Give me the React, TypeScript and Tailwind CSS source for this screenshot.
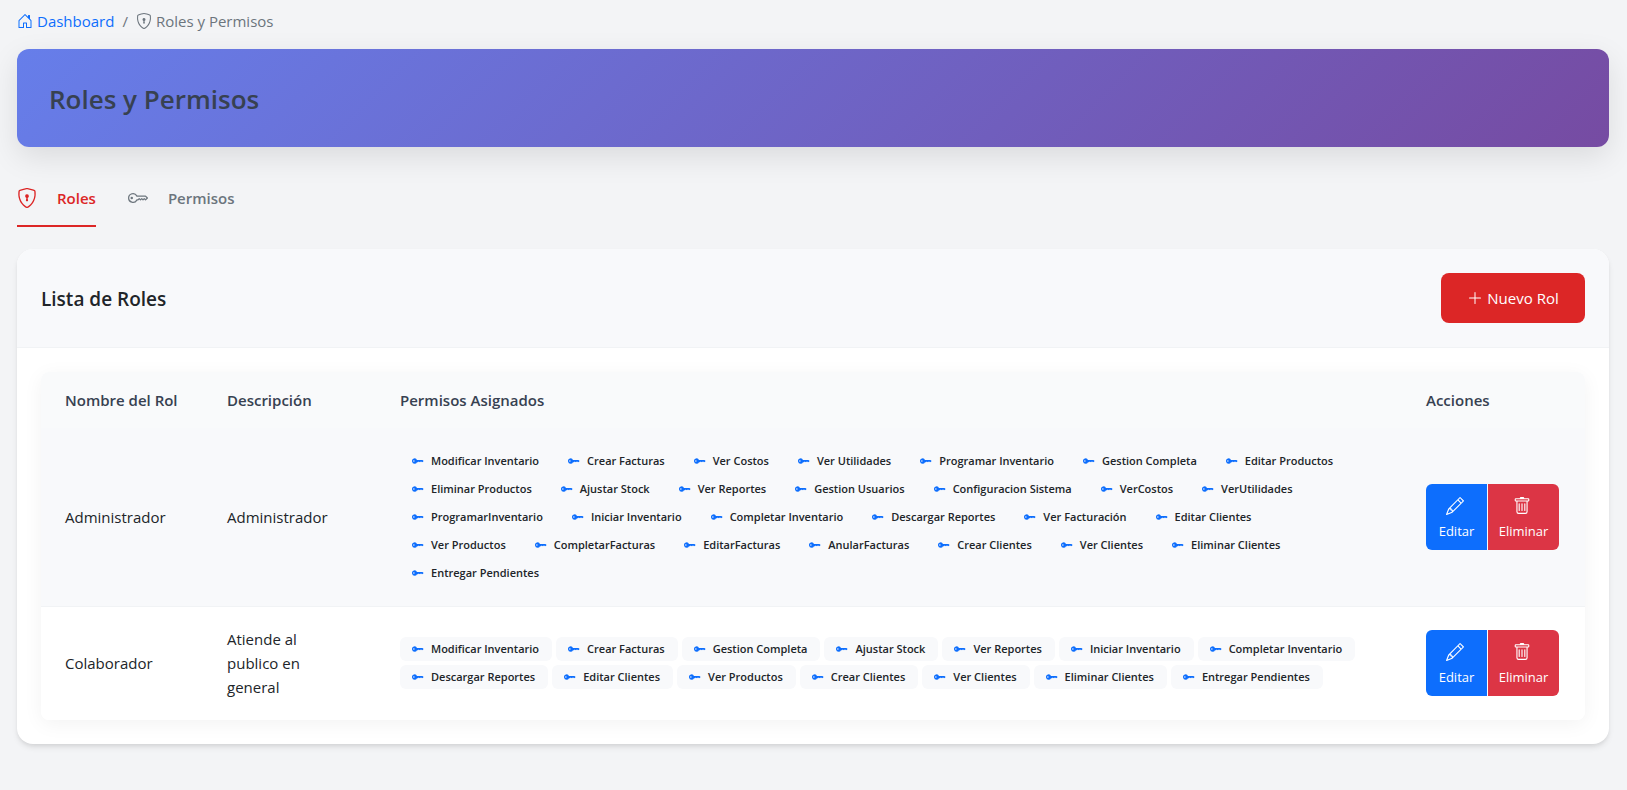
import type { ReactNode } from 'react';
import { BsHouseDoor, BsKey, BsKeyFill, BsPencil, BsPlusLg, BsShieldLock, BsTrash } from 'react-icons/bs';

type Role = {
  name: string;
  description: string;
  permissions: string[];
  rowClass: string;
};

const roles: Role[] = [
  {
    name: 'Administrador',
    description: 'Administrador',
    rowClass: 'h-[178px] bg-[#f8f9fb] border-b border-[#f1f3f5]',
    permissions: [
      'Modificar Inventario', 'Crear Facturas', 'Ver Costos', 'Ver Utilidades', 'Programar Inventario',
      'Gestion Completa', 'Editar Productos', 'Eliminar Productos', 'Ajustar Stock', 'Ver Reportes',
      'Gestion Usuarios', 'Configuracion Sistema', 'VerCostos', 'VerUtilidades', 'ProgramarInventario',
      'Iniciar Inventario', 'Completar Inventario', 'Descargar Reportes', 'Ver Facturación', 'Editar Clientes',
      'Ver Productos', 'CompletarFacturas', 'EditarFacturas', 'AnularFacturas', 'Crear Clientes',
      'Ver Clientes', 'Eliminar Clientes', 'Entregar Pendientes',
    ],
  },
  {
    name: 'Colaborador',
    description: 'Atiende al publico en general',
    rowClass: 'h-[114px] bg-white',
    permissions: [
      'Modificar Inventario', 'Crear Facturas', 'Gestion Completa', 'Ajustar Stock', 'Ver Reportes',
      'Iniciar Inventario', 'Completar Inventario', 'Descargar Reportes', 'Editar Clientes', 'Ver Productos',
      'Crear Clientes', 'Ver Clientes', 'Eliminar Clientes', 'Entregar Pendientes',
    ],
  },
];

function Permission({ children }: { children: ReactNode }) {
  return (
    <li className="flex h-6 items-center gap-[7px] rounded-md bg-[#f8f9fb] pr-[13px] pl-3 text-[11px] font-semibold text-[#212529]">
      <BsKeyFill className="size-3 shrink-0 text-[#0d6efd]" />
      {children}
    </li>
  );
}

function RoleRow({ role }: { role: Role }) {
  return (
    <tr className={role.rowClass}>
      <td className="px-6">{role.name}</td>
      <td className="px-6">{role.description}</td>
      <td className="px-6">
        <ul className="flex flex-wrap gap-1">
          {role.permissions.map((p) => (
            <Permission key={p}>{p}</Permission>
          ))}
        </ul>
      </td>
      <td className="px-6">
        <div className="flex gap-px text-[13px] text-white">
          <button type="button" className="flex h-[66px] w-[61px] flex-col items-center justify-center gap-1 rounded-l-md bg-[#0d6efd] pt-1.5">
            <BsPencil className="mr-1 size-[18px]" />
            Editar
          </button>
          <button type="button" className="flex h-[66px] w-[71px] flex-col items-center justify-center gap-1 rounded-r-md bg-[#dc3545] pt-1.5">
            <BsTrash className="mr-1 size-[18px]" />
            Eliminar
          </button>
        </div>
      </td>
    </tr>
  );
}

export default function App() {
  return (
    <div className="min-h-screen bg-[#f3f4f6] pt-[9px] pr-[18px] pb-12 pl-[17px] font-['Open_Sans',sans-serif] text-[15px] leading-6 text-[#212529]">
      <nav aria-label="breadcrumb">
        <ol className="flex items-center gap-2 text-[#6c757d]">
          <li>
            <a href="#dashboard" className="flex items-center gap-1 text-[#0d6efd]">
              <BsHouseDoor className="size-4" />
              Dashboard
            </a>
          </li>
          <li aria-hidden="true">/</li>
          <li className="flex items-center gap-1">
            <BsShieldLock className="size-4" />
            Roles y Permisos
          </li>
        </ol>
      </nav>

      <header className="mt-4 rounded-xl bg-[linear-gradient(135deg,#667eea_0%,#764ba2_100%)] px-8 pt-8 pb-[30px] shadow-[0_10px_30px_rgba(0,0,0,0.1)]">
        <h1 className="text-[26px] leading-9 font-semibold text-[#374151]">Roles y Permisos</h1>
      </header>

      <div role="tablist" className="mt-8 flex gap-8 font-semibold">
        <button type="button" role="tab" aria-selected="true" className="flex h-12 gap-5 border-b-2 border-[#dc2626] pt-[9px] text-[#dc2626]">
          <BsShieldLock className="size-5" />
          <span className="leading-5">Roles</span>
        </button>
        <button type="button" role="tab" aria-selected="false" className="flex h-12 gap-5 border-b-2 border-transparent pt-[9px] text-[#6c757d]">
          <BsKey className="size-5" />
          <span className="leading-5">Permisos</span>
        </button>
      </div>

      <section className="mt-[22px] overflow-hidden rounded-2xl bg-white shadow-[0_4px_6px_-1px_rgba(0,0,0,0.1),0_2px_4px_-1px_rgba(0,0,0,0.06)]">
        <div className="flex items-center justify-between border-b border-[#f1f3f5] bg-[#f8f9fb] p-6">
          <h2 className="pt-0.5 text-[19px] leading-7 font-semibold">Lista de Roles</h2>
          <button type="button" className="flex h-[50px] w-36 items-center justify-center gap-1 rounded-lg bg-[#dc2626] text-white">
            <BsPlusLg className="size-4" />
            Nuevo Rol
          </button>
        </div>
        <div className="p-6">
          <div className="overflow-hidden rounded-lg shadow-[0_4px_20px_rgba(0,0,0,0.05)]">
            <table className="w-full table-fixed text-left">
              <thead className="bg-[#f9fafb] text-[#374151]">
                <tr className="h-14">
                  <th scope="col" className="w-[162px] px-6 font-semibold">Nombre del Rol</th>
                  <th scope="col" className="w-[173px] px-6 font-semibold">Descripción</th>
                  <th scope="col" className="px-6 font-semibold">Permisos Asignados</th>
                  <th scope="col" className="w-[183px] px-6 font-semibold">Acciones</th>
                </tr>
              </thead>
              <tbody>
                {roles.map((role) => (
                  <RoleRow key={role.name} role={role} />
                ))}
              </tbody>
            </table>
          </div>
        </div>
      </section>
    </div>
  );
}
